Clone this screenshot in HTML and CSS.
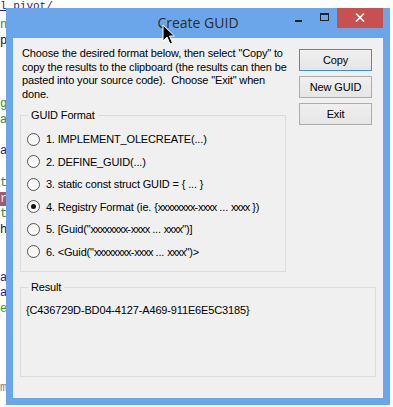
FILE: index.html
```html
<!DOCTYPE html>
<html lang="en">
<head>
    <meta charset="UTF-8">
    <title>Create GUID</title>
    <link rel="stylesheet" href="styles.css">
</head>
<body>

<div class="editor">
    <div class="crumb">l_pivot/</div>
<pre class="code"><span class="g">n</span>
<span class="k">p</span>



<span class="g">g</span>
<span class="g">a</span>

<span class="b">a</span>

<span class="g">t</span>
<span class="hl">r</span>
<span class="g">t</span>
<span class="k">h</span>


<span class="b">a</span>
<span class="b">a</span>
<span class="g2">e</span>




<span class="m">m</span></pre>
</div>

<div class="window">
    <div class="titlebar">
        <div></div>
        <div class="title">Create GUID</div>
        <div class="controls">
            <div class="ctl min"><span></span></div>
            <div class="ctl max"><span></span></div>
            <div class="ctl close">
                <svg width="10" height="9" viewBox="0 0 10 9"><path d="M1 0.5 L9 8.5 M9 0.5 L1 8.5" stroke="#fff" stroke-width="1.6"/></svg>
            </div>
        </div>
    </div>

    <div class="client">
        <div class="top">
            <div class="left">
                <p class="intro">Choose the desired format below, then select "Copy" to<br>copy the results to the clipboard (the results can then be<br>pasted into your source code).&nbsp; Choose "Exit" when<br>done.</p>
                <fieldset class="group formats">
                    <legend>GUID Format</legend>
                    <label class="opt"><input type="radio" name="fmt"> 1. IMPLEMENT_OLECREATE(...)</label>
                    <label class="opt"><input type="radio" name="fmt"> 2. DEFINE_GUID(...)</label>
                    <label class="opt"><input type="radio" name="fmt"> 3. static const struct GUID = { ... }</label>
                    <label class="opt"><input type="radio" name="fmt" checked> 4. Registry Format (ie. {<span class="xs">xxxxxxxx</span>-<span class="xs">xxxx</span> ... <span class="xs">xxxx</span> })</label>
                    <label class="opt"><input type="radio" name="fmt"> 5. [Guid("<span class="xs">xxxxxxxx</span>-<span class="xs">xxxx</span> ... <span class="xs">xxxx</span>")]</label>
                    <label class="opt"><input type="radio" name="fmt"> 6. &lt;Guid("<span class="xs">xxxxxxxx</span>-<span class="xs">xxxx</span> ... <span class="xs">xxxx</span>")&gt;</label>
                </fieldset>
            </div>
            <div class="buttons">
                <button class="btn default">Copy</button>
                <button class="btn">New GUID</button>
                <button class="btn">Exit</button>
            </div>
        </div>
        <fieldset class="group result">
            <legend>Result</legend>
            <div class="guid">{C436729D-BD04-4127-A469-911E6E5C3185}</div>
        </fieldset>
    </div>
</div>

<svg class="cursor" width="14" height="22" viewBox="0 0 14 22">
    <path d="M1 1 L1 17 L5 13 L8 20 L10.5 19 L7.5 12 L12.5 12 Z" fill="#000" stroke="#fff" stroke-width="1"/>
</svg>

</body>
</html>
```

FILE: styles.css
```css
body {
    margin: 0;
    width: 393px;
    height: 407px;
    overflow: hidden;
    position: relative;
    background-color: #fff;
}
.editor {
    font-family: "Liberation Mono", monospace;
    font-size: 12px;
    line-height: 15.8px;
    color: #111;
}
.crumb {
    height: 8px;
    font-size: 11px;
    line-height: 12px;
    color: #1d1d8a;
    text-decoration: underline;
}
.code {
    margin: 9.9px 0 0;
    font: inherit;
}
.code .g { color: #2e8b2e; }
.code .g2 { color: #3c9c12; }
.code .k { color: #111; }
.code .b { color: #1d1d8a; }
.code .m { color: #888; }
.code .hl {
    background-color: #a05a75;
    color: #f3e3ea;
}
.window {
    position: absolute;
    left: 6px;
    top: 8px;
    width: 384px;
    height: 397px;
    box-sizing: border-box;
    padding: 0 7px 7px;
    background-color: #6ca6ea;
    display: flex;
    flex-direction: column;
    font-family: "Liberation Sans", Arial, sans-serif;
    font-size: 11px;
    letter-spacing: -0.15px;
    color: #000;
}
.titlebar {
    height: 30px;
    display: grid;
    grid-template-columns: 1fr auto 1fr;
}
.title {
    font-family: "Open Sans", sans-serif;
    font-size: 14px;
    letter-spacing: 0;
    line-height: 29px;
    color: #2b2b2b;
}
.controls {
    display: flex;
    justify-content: flex-end;
    align-items: flex-start;
}
.ctl {
    width: 26px;
    height: 20px;
    display: flex;
    justify-content: center;
}
.ctl.min span {
    width: 7px;
    height: 2px;
    margin-top: 12px;
    background-color: #222;
}
.ctl.max span {
    width: 9px;
    height: 8px;
    margin-top: 5px;
    box-sizing: border-box;
    border: 1px solid #222;
    border-top-width: 2px;
}
.ctl.close {
    width: 46px;
    background-color: #c75050;
    align-items: center;
}
.ctl.close svg {
    display: block;
    margin-top: -1px;
}
.client {
    flex: 1;
    background-color: #f0f0f0;
    padding: 9px 7px 0;
}
.top {
    display: flex;
    justify-content: space-between;
}
.left {
    width: 266px;
}
.intro {
    margin: 0 0 0 2px;
    line-height: 13.5px;
    white-space: nowrap;
}
.group {
    margin: 0;
    border: 1px solid #dcdcdc;
    min-width: 0;
}
.group legend {
    padding: 0 3px;
    line-height: 14px;
}
.formats {
    margin-top: 7px;
    padding: 6px 6px 8px;
}
.formats legend {
    margin-left: 1px;
}
.opt {
    display: flex;
    align-items: center;
    height: 22.5px;
    white-space: pre;
}
.opt .xs {
    letter-spacing: -0.9px;
}
.opt input {
    appearance: none;
    -webkit-appearance: none;
    width: 13px;
    height: 13px;
    margin: 0 3px 0 0;
    box-sizing: border-box;
    border: 1px solid #555;
    border-radius: 50%;
    background: linear-gradient(#f4f4f4, #fff);
    display: flex;
    align-items: center;
    justify-content: center;
}
.opt input:checked::after {
    content: "";
    width: 5px;
    height: 5px;
    border-radius: 50%;
    background-color: #111;
}
.buttons {
    margin: 2px 4px 0 0;
    display: flex;
    flex-direction: column;
    gap: 5px;
}
.btn {
    width: 73px;
    height: 22px;
    padding: 0;
    border: 1px solid #acacac;
    background: linear-gradient(#f0f0f0, #e5e5e5);
    font: inherit;
    letter-spacing: inherit;
    color: #000;
}
.btn.default {
    border-color: #3c8fd8;
}
.result {
    margin-top: 8px;
    padding: 9px 5px 0;
}
.result legend {
    margin-left: 2px;
}
.guid {
    height: 73px;
    line-height: 14px;
}
.cursor {
    position: absolute;
    left: 162px;
    top: 24px;
}
```
